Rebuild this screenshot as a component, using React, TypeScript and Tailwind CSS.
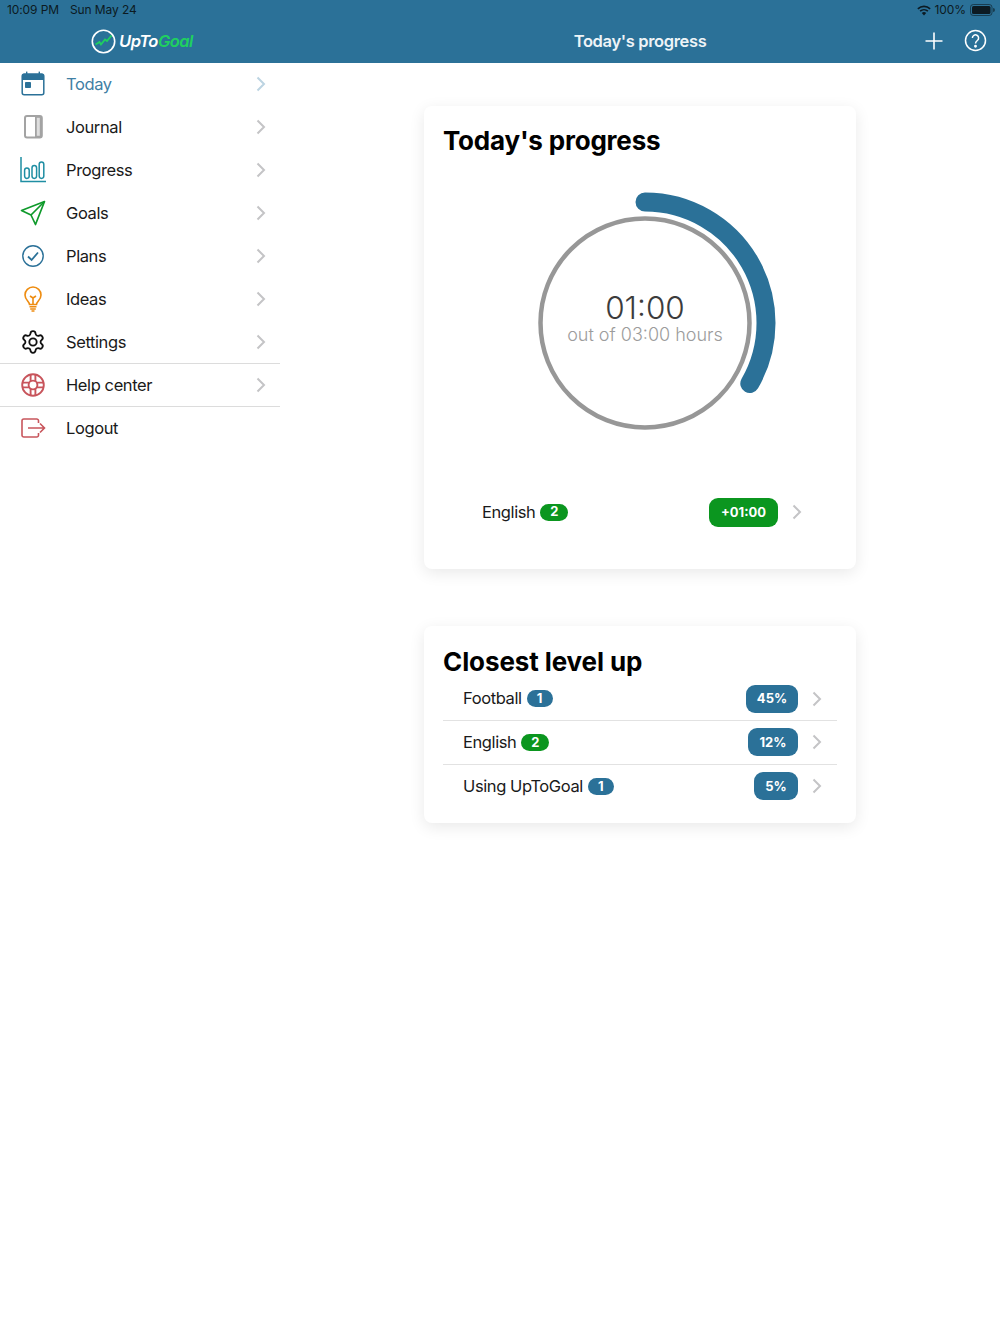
import React from "react";

const Chevron = ({ c = "#c4c4c6" }: { c?: string }) => (
  <svg width="10" height="16" viewBox="0 0 10 16" fill="none" className="shrink-0">
    <path d="M1.5 1.5 L8 8 L1.5 14.5" stroke={c} strokeWidth="2" />
  </svg>
);

const icons: Record<string, React.ReactNode> = {
  Today: (
    <svg width="26" height="26" viewBox="0 0 26 26" fill="none">
      <rect x="2.2" y="3.2" width="21.6" height="20.6" rx="2" stroke="#2b7198" strokeWidth="1.5" />
      <path d="M2 4.5 a2 2 0 0 1 2-2 h18 a2 2 0 0 1 2 2 V9 H2 Z" fill="#2b7198" />
      <rect x="6" y="0.6" width="1.4" height="3" fill="#2b7198" />
      <rect x="18.6" y="0.6" width="1.4" height="3" fill="#2b7198" />
      <rect x="5" y="11" width="6" height="6" rx="0.8" fill="#2b7198" />
    </svg>
  ),
  Journal: (
    <svg width="26" height="26" viewBox="0 0 26 26" fill="none">
      <rect x="5" y="2" width="16.8" height="21.6" rx="2" stroke="#a3a3a3" strokeWidth="2" />
      <rect x="15" y="2" width="6.5" height="21.6" rx="1" fill="#a3a3a3" />
      <rect x="16.8" y="3.8" width="3" height="18" fill="#dedede" />
    </svg>
  ),
  Progress: (
    <svg width="26" height="26" viewBox="0 0 26 26" fill="none" stroke="#1f8ea3" strokeWidth="1.5">
      <path d="M1 0 V24.4 H26" />
      <rect x="4.6" y="11" width="4.6" height="10.4" rx="2.3" />
      <rect x="12" y="8.6" width="4.6" height="12.8" rx="2.3" />
      <rect x="19.2" y="5" width="4.6" height="16.4" rx="2.3" />
    </svg>
  ),
  Goals: (
    <svg width="26" height="26" viewBox="0 0 26 26" fill="none" stroke="#0f9a2b" strokeWidth="1.7" strokeLinejoin="round">
      <path d="M24.5 1.5 L1.5 10.5 L11 15 L15.5 24.5 Z" />
      <path d="M24.5 1.5 L11 15" />
    </svg>
  ),
  Plans: (
    <svg width="26" height="26" viewBox="0 0 26 26" fill="none" stroke="#2b7198">
      <circle cx="13" cy="13" r="10.2" strokeWidth="1.4" />
      <path d="M8 13.5 L11.6 17 L18 9.5" strokeWidth="1.8" />
    </svg>
  ),
  Ideas: (
    <svg width="26" height="26" viewBox="0 0 26 26" fill="none" stroke="#ee8c10" strokeWidth="1.6">
      <path d="M9.5 18.5 C9.3 15.5 5 14 5 9 a8 8 0 0 1 16 0 C21 14 16.7 15.5 16.5 18.5 Z" />
      <path d="M10 10 L13 12 L16 10 M13 12 V18" />
      <path d="M9.5 20.8 H16.5 M10.2 23 H15.8 M11.5 25 H14.5" />
    </svg>
  ),
  Settings: (
    <svg width="26" height="26" viewBox="0 0 24 24" fill="none" stroke="#111" strokeWidth="1.7" strokeLinecap="round" strokeLinejoin="round">
      <path d="M9.671 4.136a2.34 2.34 0 0 1 4.659 0 2.34 2.34 0 0 0 3.319 1.915 2.34 2.34 0 0 1 2.33 4.033 2.34 2.34 0 0 0 0 3.831 2.34 2.34 0 0 1-2.33 4.033 2.34 2.34 0 0 0-3.319 1.915 2.34 2.34 0 0 1-4.659 0 2.34 2.34 0 0 0-3.32-1.915 2.34 2.34 0 0 1-2.33-4.033 2.34 2.34 0 0 0 0-3.831A2.34 2.34 0 0 1 6.35 6.051a2.34 2.34 0 0 0 3.319-1.915" />
      <circle cx="12" cy="12" r="3.4" />
    </svg>
  ),
  "Help center": (
    <svg width="26" height="26" viewBox="0 0 26 26" fill="none" stroke="#c8555c" strokeWidth="1.9">
      <circle cx="13" cy="13" r="10.8" />
      <circle cx="13" cy="13" r="4.4" />
      <path d="M10.6 2.4 V9.4 M15.4 2.4 V9.4 M10.6 16.6 V23.6 M15.4 16.6 V23.6 M2.4 10.6 H9.4 M2.4 15.4 H9.4 M16.6 10.6 H23.6 M16.6 15.4 H23.6" />
    </svg>
  ),
  Logout: (
    <svg width="26" height="26" viewBox="0 0 26 26" fill="none" stroke="#c8555c" strokeWidth="1.6">
      <path d="M18.5 8 V5.8 a1.8 1.8 0 0 0-1.8-1.8 H3.8 A1.8 1.8 0 0 0 2 5.8 V20.2 A1.8 1.8 0 0 0 3.8 22 H16.7 a1.8 1.8 0 0 0 1.8-1.8 V18" />
      <path d="M8 13 H24.5 M20 8.5 L24.5 13 L20 17.5" />
    </svg>
  ),
};

const menu = ["Today", "Journal", "Progress", "Goals", "Plans", "Ideas", "Settings", "Help center", "Logout"];

const Badge = ({ n, green }: { n: number; green?: boolean }) => (
  <span className={`ml-[5px] flex h-[17px] items-center justify-center rounded-full text-[13px] font-bold text-white ${green ? "w-[28px] bg-[#0b961f]" : "w-[26px] bg-[#2b7198]"}`}>
    {n}
  </span>
);

const levels = [
  { name: "Football", n: 1, pct: "45%", w: "w-[52px]" },
  { name: "English", n: 2, pct: "12%", w: "w-[50px]", green: true },
  { name: "Using UpToGoal", n: 1, pct: "5%", w: "w-[44px]" },
];

export default function App() {
  return (
    <div className="min-h-[1334px] bg-white font-['Inter','Liberation_Sans',sans-serif] text-[#111]">
      <header className="relative h-[63px] bg-[#2b7198]">
        <div className="flex h-[20px] items-center justify-between pl-[7px] pr-[5px] text-[12px] tracking-[-0.1px] text-[#0c1a22]">
          <div className="flex gap-[11px]">
            <span>10:09 PM</span>
            <span>Sun May 24</span>
          </div>
          <div className="flex items-center gap-[4px]">
            <svg width="14" height="11" viewBox="0 0 14 11" fill="#0c1a22">
              <path d="M7 10.5 L4.8 8 a3.2 3.2 0 0 1 4.4 0 Z" />
              <path d="M3.6 6.8 L2.6 5.6 a6.6 6.6 0 0 1 8.8 0 L10.4 6.8 a5 5 0 0 0-6.8 0 Z" />
              <path d="M1.4 4.4 L0.3 3.2 a10 10 0 0 1 13.4 0 L12.6 4.4 a8.4 8.4 0 0 0-11.2 0 Z" />
            </svg>
            <span>100%</span>
            <svg width="25" height="12" viewBox="0 0 25 12" fill="none">
              <rect x="0.5" y="0.5" width="21.5" height="11" rx="2.8" stroke="#0c1a22" strokeOpacity="0.6" />
              <rect x="2" y="2" width="18.5" height="8" rx="1.5" fill="#0c1a22" />
              <path d="M23 4 a2 2 0 0 1 0 4 Z" fill="#0c1a22" fillOpacity="0.6" />
            </svg>
          </div>
        </div>
        <div className="flex h-[43px]">
          <div className="flex w-[280px] items-center justify-center gap-[3px] pl-[4px]">
            <svg width="25" height="25" viewBox="0 0 25 25" fill="none">
              <circle cx="12.5" cy="12.5" r="11.2" stroke="#fff" strokeWidth="1.6" />
              <path d="M4.5 15.5 L8.5 13 L10 15.5 L14 10.5 L16 12 L20.5 6.5" stroke="#1fd05f" strokeWidth="1.8" />
            </svg>
            <span className="text-[16.5px] font-semibold italic tracking-[-0.5px] text-white">
              UpTo<span className="text-[#1fd05f]">Goal</span>
            </span>
          </div>
          <div className="flex flex-1 items-center justify-center text-[16.5px] font-semibold tracking-[-0.35px] text-[#eef4f7]">Today's progress</div>
        </div>
        <div className="absolute right-[13px] top-[29px] flex items-center gap-[20px]">
          <svg width="20" height="20" viewBox="0 0 20 20" stroke="#fff" strokeWidth="1.6">
            <path d="M10 1.5 V18.5 M1.5 10 H18.5" />
          </svg>
          <svg width="23" height="23" viewBox="0 0 23 23" fill="none" stroke="#fff" strokeWidth="1.5">
            <circle cx="11.5" cy="11.5" r="10" />
            <path d="M8.4 9 a3.1 3.1 0 1 1 4.9 2.5 c-1.2 0.9-1.8 1.4-1.8 2.9" />
            <circle cx="11.5" cy="17.2" r="0.7" fill="#fff" />
          </svg>
        </div>
      </header>

      <div className="flex">
        <nav className="w-[280px] shrink-0">
          {menu.map((m) => (
            <div key={m} className={`flex h-[43px] items-center pl-[20px] pr-[14.5px] ${m === "Settings" || m === "Help center" ? "border-b border-[#dcdcdc] pt-px" : ""}`}>
              <span className="mb-[2px] flex w-[26px] justify-center">{icons[m]}</span>
              <span className={`ml-[20px] flex-1 text-[16.5px] tracking-[-0.4px] ${m === "Today" ? "text-[#3f80a5]" : "text-[#1a1a1a]"}`}>{m}</span>
              {m !== "Logout" && (
                <span className="mb-[2px]">
                  <Chevron c={m === "Today" ? "#bcd4e2" : "#c4c4c6"} />
                </span>
              )}
            </div>
          ))}
        </nav>

        <main className="flex flex-1 flex-col items-center pt-[43px]">
          <section className="h-[463px] w-[432px] rounded-lg bg-white pt-4 shadow-[0_4px_16px_rgba(0,0,0,0.09)]">
            <h2 className="flex h-[36px] items-center pl-[19px] text-[26px] font-bold tracking-[-0.2px] text-black">Today's progress</h2>
            <div className="relative ml-[86px] mt-[30px] h-[270px] w-[270px]">
              <svg width="270" height="270" viewBox="0 0 270 270" fill="none">
                <circle cx="135" cy="135" r="104.5" stroke="#979797" strokeWidth="4.5" />
                <path d="M135 14 A121 121 0 0 1 239.8 195.5" stroke="#2b7198" strokeWidth="19" strokeLinecap="round" />
              </svg>
              <div className="absolute inset-x-0 top-[103.5px] flex flex-col items-center">
                <span className="h-[32px] text-[31.5px] font-light leading-[32px] text-[#3c3c3c]">01:00</span>
                <span className="mt-[1px] h-[20px] text-[18px] font-light leading-[20px] text-[#9c9c9c]">out of 03:00 hours</span>
              </div>
            </div>
            <div className="ml-[58px] mr-[54px] mt-[40px] flex h-[28px] items-center">
              <span className="pt-px text-[16.5px] tracking-[-0.4px] text-[#1a1a1a]">English</span>
              <Badge n={2} green />
              <span className="ml-auto flex h-[29px] w-[69px] items-center justify-center rounded-[9px] bg-[#0b961f] pt-px text-[13px] font-bold text-white">+01:00</span>
              <span className="ml-[14px]">
                <Chevron />
              </span>
            </div>
          </section>

          <section className="mt-[57px] h-[197px] w-[432px] rounded-lg bg-white pt-[20px] shadow-[0_4px_16px_rgba(0,0,0,0.09)]">
            <h2 className="flex h-[31.5px] items-center pl-[19px] text-[26px] font-bold tracking-[-0.1px] text-black">Closest level up</h2>
            <div className="mx-[19px]">
              {levels.map((l, i) => (
                <div key={l.name} className={`flex h-[43.5px] items-center pl-[20px] pr-[15px] ${i < 2 ? "border-b border-[#e2e2e2]" : ""}`}>
                  <span className="text-[16.5px] tracking-[-0.4px] text-[#1a1a1a]">{l.name}</span>
                  <Badge n={l.n} green={l.green} />
                  <span className={`ml-auto flex h-[28px] items-center justify-center rounded-[9px] bg-[#2b7198] text-[13px] font-bold text-white ${l.w}`}>{l.pct}</span>
                  <span className="ml-[14px]">
                    <Chevron />
                  </span>
                </div>
              ))}
            </div>
          </section>
        </main>
      </div>
    </div>
  );
}
